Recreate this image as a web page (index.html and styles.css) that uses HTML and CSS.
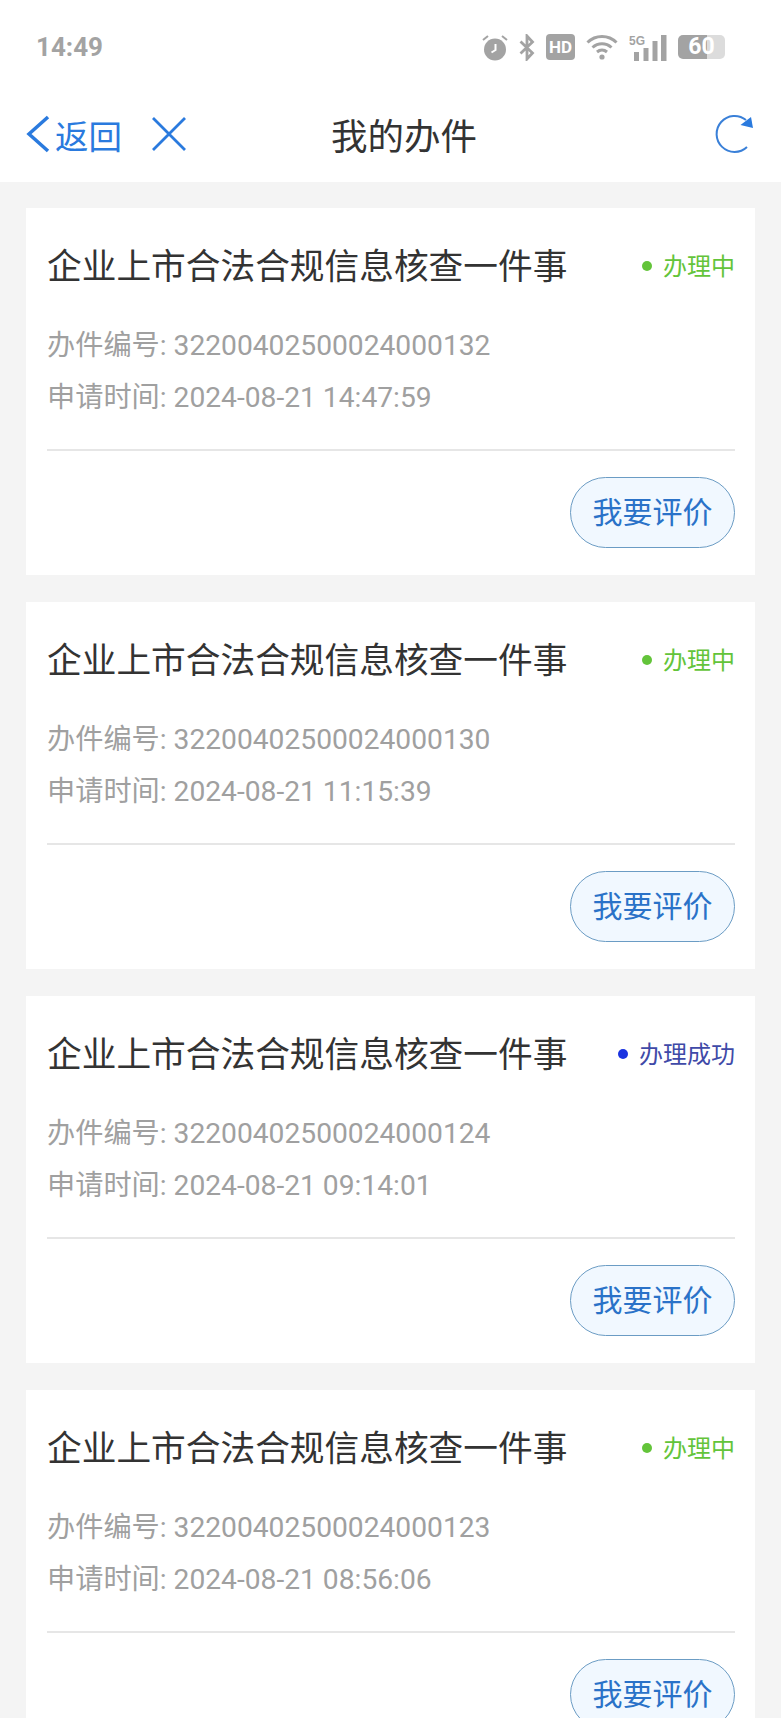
FILE: index.html
```html
<!DOCTYPE html>
<html lang="zh-CN">

<head>
    <meta charset="UTF-8">
    <meta name="viewport" content="width=device-width, initial-scale=1.0">
    <title>我的办件</title>
    <link rel="stylesheet" href="styles.css">
</head>

<body>
    <div class="status-bar">
        <span class="clock">14:49</span>
        <div class="status-icons">
            <svg class="alarm-icon" width="26" height="27" viewBox="0 0 26 27">
                <circle cx="13" cy="15.500" r="11" fill="#a3a3a3"/>
                <path d="M13.500 10v6l-4 2.500" fill="none" stroke="#fff" stroke-width="2"/>
                <path d="M1 6l5-4M25 6l-5-4" fill="none" stroke="#a3a3a3" stroke-width="2"/>
            </svg>
            <svg class="bt-icon" width="16" height="27" viewBox="0 0 16 27">
                <path d="M1.500 7.500l12 11.500-5.500 6V2l5.500 6-12 11.500" fill="none" stroke="#a3a3a3" stroke-width="2.800"/>
            </svg>
            <span class="hd-badge">HD</span>
            <svg class="wifi-icon" width="32" height="26" viewBox="0 0 32 26">
                <path d="M1.500 8.500c8-8 21-8 29 0M6.500 13.500c5.500-5 13.500-5 19 0M11 18c3-2.600 7-2.600 10 0" fill="none" stroke="#a3a3a3" stroke-width="3"/>
                <circle cx="16" cy="23" r="2.600" fill="#a3a3a3"/>
            </svg>
            <svg class="signal-icon" width="38" height="27" viewBox="0 0 38 27">
                <rect x="5" y="18" width="5" height="9" fill="#a3a3a3"/>
                <rect x="14.500" y="14" width="5" height="13" fill="#a3a3a3"/>
                <rect x="23.500" y="7" width="5" height="20" fill="#a3a3a3"/>
                <rect x="32" y="1" width="5.500" height="26" fill="#a3a3a3"/>
                <text x="0" y="11" class="signal-label">5G</text>
            </svg>
            <div class="battery">
                <span class="battery-level">60</span>
            </div>
        </div>
    </div>

    <header class="nav-bar">
        <div class="nav-left">
            <svg width="24" height="38" viewBox="0 0 24 38">
                <path d="M22 2L3 19l19 17" fill="none" stroke="#2a7ade" stroke-width="3.500"/>
            </svg>
            <span class="back-text">返回</span>
            <svg class="close-icon" width="36" height="36" viewBox="0 0 36 36">
                <path d="M2 2l32 32M34 2L2 34" fill="none" stroke="#2a7ade" stroke-width="2.800"/>
            </svg>
        </div>
        <h1 class="nav-title">我的办件</h1>
        <svg class="refresh-icon" width="40" height="40" viewBox="0 0 40 40">
            <path d="M32 33A18 18 0 1 1 31 6" fill="none" stroke="#3a80d8" stroke-width="2"/>
            <path d="M38 14L25.500 11 36 3z" fill="#2a7ade"/>
        </svg>
    </header>

    <main class="list">
        <section class="card">
            <div class="card-head">
                <h2 class="card-title">企业上市合法合规信息核查一件事</h2>
                <span class="state state-doing">办理中</span>
            </div>
            <p class="meta">办件编号: 32200402500024000132</p>
            <p class="meta">申请时间: 2024-08-21 14:47:59</p>
            <div class="card-foot"><button class="rate-btn">我要评价</button></div>
        </section>

        <section class="card">
            <div class="card-head">
                <h2 class="card-title">企业上市合法合规信息核查一件事</h2>
                <span class="state state-doing">办理中</span>
            </div>
            <p class="meta">办件编号: 32200402500024000130</p>
            <p class="meta">申请时间: 2024-08-21 11:15:39</p>
            <div class="card-foot"><button class="rate-btn">我要评价</button></div>
        </section>

        <section class="card">
            <div class="card-head">
                <h2 class="card-title">企业上市合法合规信息核查一件事</h2>
                <span class="state state-done">办理成功</span>
            </div>
            <p class="meta">办件编号: 32200402500024000124</p>
            <p class="meta">申请时间: 2024-08-21 09:14:01</p>
            <div class="card-foot"><button class="rate-btn">我要评价</button></div>
        </section>

        <section class="card">
            <div class="card-head">
                <h2 class="card-title">企业上市合法合规信息核查一件事</h2>
                <span class="state state-doing">办理中</span>
            </div>
            <p class="meta">办件编号: 32200402500024000123</p>
            <p class="meta">申请时间: 2024-08-21 08:56:06</p>
            <div class="card-foot"><button class="rate-btn">我要评价</button></div>
        </section>
    </main>
</body>

</html>
```

FILE: styles.css
```css
html,
body {
    height: 1718px;
    overflow: hidden;
}

body {
    margin: 0;
    background-color: #f4f4f4;
    font-family: Roboto, "Noto Sans CJK SC", sans-serif;
}

.status-bar {
    height: 93px;
    box-sizing: border-box;
    padding: 32px 56px 0 36px;
    display: flex;
    justify-content: space-between;
    align-items: flex-start;
    background-color: #fff;
}

.clock {
    font-size: 26px;
    line-height: 30px;
    font-weight: 700;
    color: #a3a3a3;
}

.status-icons {
    display: flex;
    align-items: center;
    gap: 11px;
    height: 30px;
}

.hd-badge {
    width: 29px;
    height: 26px;
    border-radius: 4px;
    background-color: #a3a3a3;
    color: #fff;
    font-size: 17px;
    line-height: 26px;
    font-weight: 700;
    text-align: center;
}

.signal-label {
    font-family: "Liberation Sans", sans-serif;
    font-size: 12px;
    font-weight: 700;
    fill: #a3a3a3;
}

.battery {
    width: 47px;
    height: 24px;
    border-radius: 5px;
    background: linear-gradient(to right, #a3a3a3 62%, #dcdcdc 62%);
    color: #fff;
    font-size: 23px;
    line-height: 24px;
    font-weight: 700;
    text-align: center;
}

.nav-bar {
    height: 89px;
    box-sizing: border-box;
    padding: 0 26px 7px 26px;
    display: flex;
    align-items: center;
    background-color: #fff;
}

.nav-left {
    display: flex;
    align-items: center;
}

.back-text {
    margin-left: 5px;
    font-size: 33.500px;
    color: #2a7ade;
}

.close-icon {
    margin-left: 29px;
}

.nav-title {
    margin: 0 auto 0 144px;
    font-size: 36.500px;
    font-weight: 400;
    color: #333;
}

.list {
    padding: 26px 26px 0;
}

.card {
    height: 367px;
    box-sizing: border-box;
    margin-bottom: 27px;
    padding: 0 20px 0 21px;
    background-color: #fff;
}

.card-head {
    height: 112px;
    box-sizing: border-box;
    padding-top: 6px;
    display: flex;
    align-items: center;
    justify-content: space-between;
}

.card-title {
    margin: 0;
    font-size: 34.700px;
    line-height: 44px;
    font-weight: 400;
    color: #333;
}

.state {
    display: flex;
    align-items: center;
    gap: 11px;
    padding-bottom: 5px;
    font-size: 24px;
}

.state::before {
    content: "";
    width: 10px;
    height: 10px;
    margin-top: 3px;
    border-radius: 50%;
    background-color: currentColor;
}

.state-doing {
    color: #63c43a;
}

.state-done {
    color: #3f4aa8;
}

.state-done::before {
    background-color: #1a33e0;
}

.meta {
    margin: 0;
    height: 52px;
    font-size: 28.200px;
    line-height: 52px;
    color: #a0a0a0;
}

.card-foot {
    margin-top: 25px;
    padding-top: 26px;
    border-top: 2px solid #e6e6e6;
    display: flex;
    justify-content: flex-end;
}

.rate-btn {
    width: 165px;
    height: 71px;
    padding: 0 0 6px;
    border: 1px solid #6b9cc4;
    border-radius: 36px;
    background-color: #f1f8ff;
    color: #2a72c8;
    font-family: inherit;
    font-size: 30px;
}
```
